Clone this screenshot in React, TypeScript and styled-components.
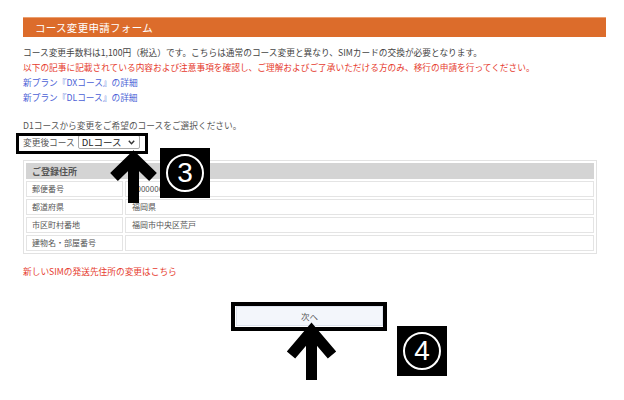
import React from "react";
import styled, { createGlobalStyle } from "styled-components";

const Global = createGlobalStyle`
  html, body { margin: 0; padding: 0; background: #fff; }
  body { font-family: "Noto Sans CJK JP", "Liberation Sans", sans-serif; }
`;

const Page = styled.div`
  position: relative;
  width: 624px;
  height: 400px;
  overflow: hidden;
  padding: 17px 18px 0 23px;
  box-sizing: border-box;
  color: #444;
`;

const TitleBar = styled.div`
  height: 20px;
  background: #dc6c2b;
  border-top: 1px solid #eba070;
  box-sizing: border-box;
  color: #fff;
  font-size: 10.5px;
  line-height: 19px;
  padding-left: 12px;
  letter-spacing: 0.3px;
`;

const Intro = styled.div`
  margin-top: 8px;
  font-size: 8.7px;
  line-height: 15px;
`;

const Line = styled.div<{ $tone?: "red" | "blue" | "gray" }>`
  white-space: nowrap;
  color: ${(p) => (p.$tone === "red" ? "#e63b2e" : p.$tone === "blue" ? "#4b5fd6" : "#444")};
`;

const Prompt = styled.div`
  margin-top: 13px;
  font-size: 8.7px;
  line-height: 15px;
  color: #555;
`;

const SelectRow = styled.div`
  position: relative;
  margin-top: 1px;
  display: flex;
  width: fit-content;
  align-items: center;
  gap: 3px;
  height: 16px;
  font-size: 8.7px;
  color: #555;
`;

const FakeSelect = styled.div`
  width: 62px;
  height: 14px;
  box-sizing: border-box;
  border: 1px solid #aaa;
  border-radius: 2px;
  background: #fff;
  display: flex;
  align-items: center;
  justify-content: space-between;
  padding: 0 4px 0 3px;
  font-size: 9.5px;
  color: #222;
`;

const Frame = styled.div<{ $w: number }>`
  position: absolute;
  border: ${(p) => p.$w}px solid #000;
  pointer-events: none;
`;

const Table = styled.table`
  margin-top: 10px;
  width: 574px;
  border: 1px solid #e2e2e2;
  border-collapse: separate;
  border-spacing: 2px;
  font-size: 8px;
  color: #555;
`;

const HeadCell = styled.th`
  height: 16px;
  padding: 0 0 0 6px;
  background: #d4d4d4;
  text-align: left;
  font-weight: bold;
  font-size: 9px;
  color: #555;
`;

const Cell = styled.td<{ $label?: boolean }>`
  height: 16px;
  box-sizing: border-box;
  border: 1px solid #e4e4e4;
  padding: 0 0 0 ${(p) => (p.$label ? 5 : 6)}px;
  width: ${(p) => (p.$label ? "97px" : "auto")};
  line-height: 14px;
  color: #555;
`;

const Notice = styled.div`
  margin-top: 10px;
  font-size: 8.7px;
  line-height: 15px;
  color: #e63b2e;
`;

const ButtonWrap = styled.div`
  position: relative;
  width: 147px;
  margin: 27px 0 0 213px;
`;

const NextButton = styled.button`
  display: block;
  width: 147px;
  height: 20px;
  border: 1px solid #dde3ee;
  background: #f3f6fb;
  font-family: inherit;
  font-size: 8.5px;
  color: #555;
  padding: 0;
`;

const Badge = styled.div<{ $x: number; $y: number }>`
  position: absolute;
  left: ${(p) => p.$x}px;
  top: ${(p) => p.$y}px;
  width: 50px;
  height: 50px;
  background: #000;
  display: flex;
  align-items: center;
  justify-content: center;
`;

const Circle = styled.div`
  width: 38px;
  height: 38px;
  box-sizing: border-box;
  border: 2.5px solid #fff;
  border-radius: 50%;
  color: #fff;
  font-family: "Liberation Sans", sans-serif;
  font-size: 28px;
  line-height: 33px;
  text-align: center;
`;

const ArrowLayer = styled.svg`
  position: absolute;
  left: 0;
  top: 0;
  pointer-events: none;
`;

const Chevron = () => (
  <svg width="7" height="5" viewBox="0 0 7 5">
    <polyline points="0.8,0.8 3.5,3.8 6.2,0.8" fill="none" stroke="#333" strokeWidth="1.4" />
  </svg>
);

const rows: [string, string][] = [
  ["郵便番号", "1000006"],
  ["都道府県", "福岡県"],
  ["市区町村番地", "福岡市中央区荒戸"],
  ["建物名・部屋番号", ""],
];

export default function App() {
  return (
    <>
      <Global />
      <Page>
        <TitleBar>コース変更申請フォーム</TitleBar>
        <Intro>
          <Line>コース変更手数料は1,100円（税込）です。こちらは通常のコース変更と異なり、SIMカードの交換が必要となります。</Line>
          <Line $tone="red">以下の記事に記載されている内容および注意事項を確認し、ご理解およびご了承いただける方のみ、移行の申請を行ってください。</Line>
          <Line $tone="blue">新プラン『DXコース』の詳細</Line>
          <Line $tone="blue">新プラン『DLコース』の詳細</Line>
        </Intro>
        <Prompt>D1コースから変更をご希望のコースをご選択ください。</Prompt>
        <SelectRow>
          <span>変更後コース</span>
          <FakeSelect>
            <span>DLコース</span>
            <Chevron />
          </FakeSelect>
          <Frame $w={3} style={{ left: -7, right: -8, top: -1, bottom: -4 }} />
        </SelectRow>
        <Table>
          <tbody>
            <tr>
              <HeadCell colSpan={2}>ご登録住所</HeadCell>
            </tr>
            {rows.map(([k, v]) => (
              <tr key={k}>
                <Cell $label>{k}</Cell>
                <Cell>{v}</Cell>
              </tr>
            ))}
          </tbody>
        </Table>
        <Notice>新しいSIMの発送先住所の変更はこちら</Notice>
        <ButtonWrap>
          <NextButton>次へ</NextButton>
          <Frame $w={4} style={{ left: -5, right: -4, top: -4, bottom: -5 }} />
        </ButtonWrap>
        <Badge $x={160} $y={148}>
          <Circle>3</Circle>
        </Badge>
        <Badge $x={397} $y={326}>
          <Circle>4</Circle>
        </Badge>
        <ArrowLayer width="624" height="400" viewBox="0 0 624 400">
          <g stroke="#000" fill="none" strokeLinecap="butt" strokeLinejoin="miter" strokeMiterlimit="10">
            <polyline points="114,177 133.5,158 153,177" strokeWidth="11" />
            <line x1="133.5" y1="159" x2="133.5" y2="203" strokeWidth="11" />
            <polyline points="291,355 311.5,331 332,355" strokeWidth="11" />
            <line x1="311.5" y1="332" x2="311.5" y2="380" strokeWidth="11" />
          </g>
        </ArrowLayer>
      </Page>
    </>
  );
}
